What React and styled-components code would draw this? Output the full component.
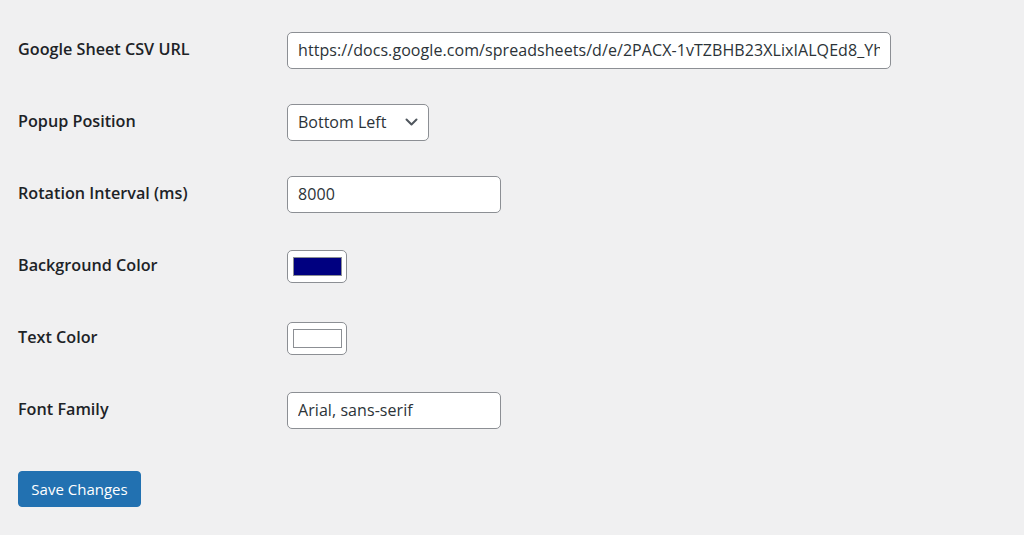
import React from "react";
import styled, { createGlobalStyle } from "styled-components";

const COLORS = {
  page: "#f0f0f1",
  text: "#1d2327",
  border: "#8c8f94",
  blue: "#2271b1",
  field: "#2c3338",
};

const FONT = `"Open Sans", "Noto Sans", "Liberation Sans", sans-serif`;

const GlobalStyle = createGlobalStyle`
  html, body {
    margin: 0;
    padding: 0;
    background: ${COLORS.page};
  }
  body {
    font-family: ${FONT};
    color: ${COLORS.text};
  }
`;

const Chevron = () => (
  <svg width="13" height="8" viewBox="0 0 13 8" fill="none">
    <path d="M1.5 1.5 L6.5 6.5 L11.5 1.5" stroke="#50575e" strokeWidth="2" strokeLinecap="round" strokeLinejoin="round" />
  </svg>
);

const fields = [
  { label: "Google Sheet CSV URL", type: "text", value: "https://docs.google.com/spreadsheets/d/e/2PACX-1vTZBHB23XLixIALQEd8_Yh", width: 604 },
  { label: "Popup Position", type: "select", value: "Bottom Left" },
  { label: "Rotation Interval (ms)", type: "text", value: "8000", width: 214 },
  { label: "Background Color", type: "color", value: "#000080" },
  { label: "Text Color", type: "color", value: "#ffffff" },
  { label: "Font Family", type: "text", value: "Arial, sans-serif", width: 214 },
];

const App = () => {
  return (
    <>
      <GlobalStyle />
      <Page>
        <FormTable>
          {fields.map((f) => (
            <Row key={f.label}>
              <Label>{f.label}</Label>
              <Cell>
                {f.type === "text" && (
                  <TextInput $width={f.width}>
                    <InputText>{f.value}</InputText>
                  </TextInput>
                )}
                {f.type === "select" && (
                  <Select>
                    <span>{f.value}</span>
                    <Chevron />
                  </Select>
                )}
                {f.type === "color" && (
                  <ColorBox>
                    <Swatch $color={f.value} />
                  </ColorBox>
                )}
              </Cell>
            </Row>
          ))}
        </FormTable>
        <SaveButton type="button">Save Changes</SaveButton>
      </Page>
    </>
  );
};

export default App;

/* ============= STYLES ============= */

const Page = styled.div`
  padding: 14px 18px 0;
`;

const FormTable = styled.div`
  display: flex;
  flex-direction: column;
`;

const Row = styled.div`
  display: grid;
  grid-template-columns: 269px 1fr;
  align-items: center;
  height: 72px;
`;

const Label = styled.div`
  font-size: 16.2px;
  font-weight: 600;
  color: ${COLORS.text};
  margin-top: -2px;
`;

const Cell = styled.div`
  display: flex;
  align-items: center;
`;

const TextInput = styled.div`
  box-sizing: border-box;
  width: ${(p) => p.$width}px;
  height: 37px;
  padding: 0 10px;
  background: #fff;
  border: 1px solid ${COLORS.border};
  border-radius: 5px;
  display: flex;
  align-items: center;
  font-size: 16px;
  color: ${COLORS.field};
`;

const InputText = styled.span`
  flex: 1;
  overflow: hidden;
  white-space: nowrap;
  letter-spacing: 0.07px;
`;

const Select = styled.div`
  box-sizing: border-box;
  width: 142px;
  height: 37px;
  padding: 0 10px 0 10px;
  background: #fff;
  border: 1px solid ${COLORS.border};
  border-radius: 5px;
  display: flex;
  align-items: center;
  justify-content: space-between;
  font-size: 16px;
  color: ${COLORS.field};
`;

const ColorBox = styled.div`
  box-sizing: border-box;
  width: 60px;
  height: 33px;
  background: #fff;
  border: 1px solid ${COLORS.border};
  border-radius: 5px;
  display: flex;
  align-items: center;
  justify-content: center;
`;

const Swatch = styled.div`
  box-sizing: border-box;
  width: 49px;
  height: 19px;
  background: ${(p) => p.$color};
  border: 1px solid ${COLORS.border};
`;

const SaveButton = styled.button`
  margin-top: 25px;
  width: 123px;
  height: 36px;
  padding: 0;
  background: ${COLORS.blue};
  border: 1px solid ${COLORS.blue};
  border-radius: 4px;
  color: #fff;
  font-family: ${FONT};
  font-size: 15px;
  cursor: pointer;
`;
